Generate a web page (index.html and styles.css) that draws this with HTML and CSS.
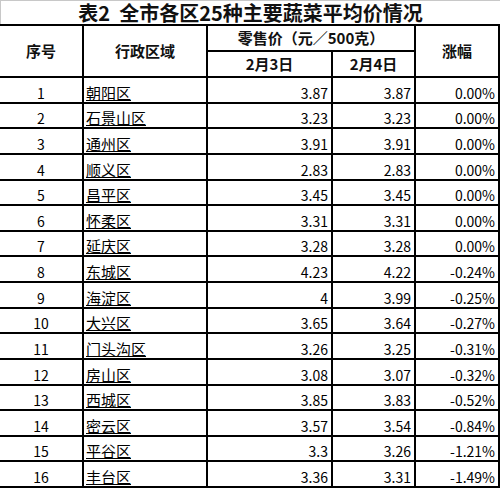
FILE: index.html
```html
<!DOCTYPE html>
<html lang="zh">
<head>
<meta charset="utf-8">
<title>全市各区25种主要蔬菜平均价情况</title>
<link rel="stylesheet" href="styles.css">
</head>
<body>
<div class="sheet">
  <div class="title">表2&nbsp;&nbsp;全市各区25种主要蔬菜平均价情况</div>
  <div class="grid">
    <div class="c h rs2">序号</div>
    <div class="c h rs2">行政区域</div>
    <div class="c h cs2">零售价（元／500克）</div>
    <div class="c h rs2">涨幅</div>
    <div class="c h">2月3日</div>
    <div class="c h">2月4日</div>

    <div class="c n">1</div><div class="c d"><span class="link">朝阳区</span></div><div class="c r">3.87</div><div class="c r">3.87</div><div class="c r">0.00%</div>
    <div class="c n">2</div><div class="c d"><span class="link">石景山区</span></div><div class="c r">3.23</div><div class="c r">3.23</div><div class="c r">0.00%</div>
    <div class="c n">3</div><div class="c d"><span class="link">通州区</span></div><div class="c r">3.91</div><div class="c r">3.91</div><div class="c r">0.00%</div>
    <div class="c n">4</div><div class="c d"><span class="link">顺义区</span></div><div class="c r">2.83</div><div class="c r">2.83</div><div class="c r">0.00%</div>
    <div class="c n">5</div><div class="c d"><span class="link">昌平区</span></div><div class="c r">3.45</div><div class="c r">3.45</div><div class="c r">0.00%</div>
    <div class="c n">6</div><div class="c d"><span class="link">怀柔区</span></div><div class="c r">3.31</div><div class="c r">3.31</div><div class="c r">0.00%</div>
    <div class="c n">7</div><div class="c d"><span class="link">延庆区</span></div><div class="c r">3.28</div><div class="c r">3.28</div><div class="c r">0.00%</div>
    <div class="c n">8</div><div class="c d"><span class="link">东城区</span></div><div class="c r">4.23</div><div class="c r">4.22</div><div class="c r">-0.24%</div>
    <div class="c n">9</div><div class="c d"><span class="link">海淀区</span></div><div class="c r">4</div><div class="c r">3.99</div><div class="c r">-0.25%</div>
    <div class="c n">10</div><div class="c d"><span class="link">大兴区</span></div><div class="c r">3.65</div><div class="c r">3.64</div><div class="c r">-0.27%</div>
    <div class="c n">11</div><div class="c d"><span class="link">门头沟区</span></div><div class="c r">3.26</div><div class="c r">3.25</div><div class="c r">-0.31%</div>
    <div class="c n">12</div><div class="c d"><span class="link">房山区</span></div><div class="c r">3.08</div><div class="c r">3.07</div><div class="c r">-0.32%</div>
    <div class="c n">13</div><div class="c d"><span class="link">西城区</span></div><div class="c r">3.85</div><div class="c r">3.83</div><div class="c r">-0.52%</div>
    <div class="c n">14</div><div class="c d"><span class="link">密云区</span></div><div class="c r">3.57</div><div class="c r">3.54</div><div class="c r">-0.84%</div>
    <div class="c n">15</div><div class="c d"><span class="link">平谷区</span></div><div class="c r">3.3</div><div class="c r">3.26</div><div class="c r">-1.21%</div>
    <div class="c n">16</div><div class="c d"><span class="link">丰台区</span></div><div class="c r">3.36</div><div class="c r">3.31</div><div class="c r">-1.49%</div>
  </div>
</div>
</body>
</html>
```

FILE: styles.css
```css
html, body {
  margin: 0;
  padding: 0;
  background: #fff;
}

.sheet {
  width: 500px;
  font-family: "Noto Sans CJK SC", "Liberation Sans", sans-serif;
  color: #000;
}

.title {
  box-sizing: border-box;
  height: 24px;
  padding-top: 1px;
  border-top: 1px solid #c8c8c8;
  border-left: 1px solid #c8c8c8;
  text-align: center;
  font-size: 20px;
  font-weight: bold;
  line-height: 22px;
  white-space: nowrap;
  color: #111;
}

.grid {
  display: grid;
  grid-template-columns: 84px 124px 125px 83px 84px;
  grid-template-rows: 26px 26px repeat(16, 25.625px);
  border-top: 2px solid #000;
}

.c {
  box-sizing: border-box;
  border-right: 2px solid #000;
  border-bottom: 2px solid #000;
  display: flex;
  align-items: flex-end;
  padding: 0 2px 1px 2px;
  font-size: 14px;
  line-height: 16px;
  white-space: nowrap;
  overflow: hidden;
}

.h {
  align-items: center;
  justify-content: center;
  font-weight: bold;
  font-size: 15px;
  padding: 0;
  color: #111;
}

.rs2 {
  grid-row: span 2;
}

.cs2 {
  grid-column: span 2;
}

.n {
  justify-content: center;
}

.d {
  justify-content: flex-start;
  font-size: 15px;
}

.r {
  justify-content: flex-end;
  padding-right: 3px;
}

.link {
  text-decoration: underline;
  text-decoration-thickness: 1px;
  text-underline-offset: 1px;
}
```
